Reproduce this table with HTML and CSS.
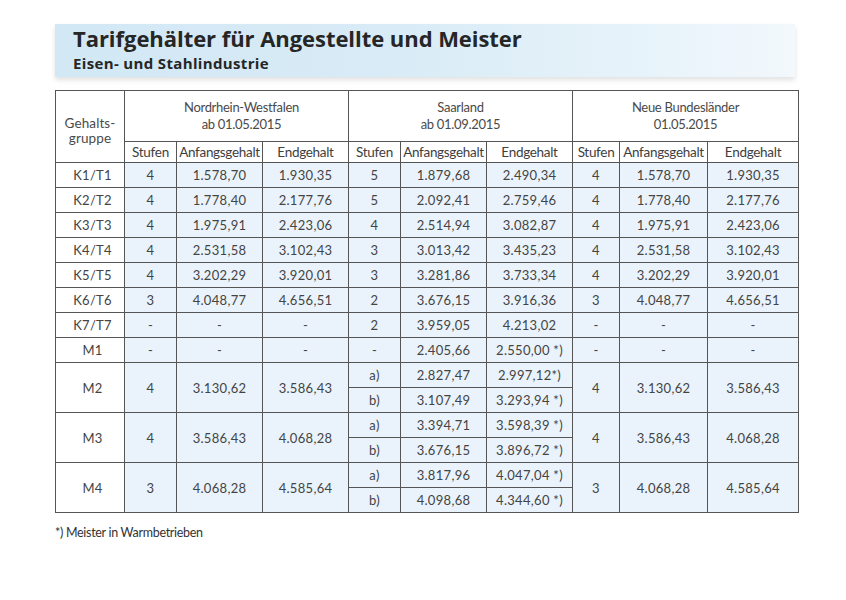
FILE: index.html
```html
<!DOCTYPE html>
<html lang="de">
<head>
<meta charset="utf-8">
<title>Tarifgehälter für Angestellte und Meister</title>
<link rel="stylesheet" href="styles.css">
</head>
<body>
<div class="page">
  <header class="banner">
    <h1 class="title">Tarifgehälter für Angestellte und Meister</h1>
    <h2 class="subtitle">Eisen- und Stahlindustrie</h2>
  </header>

  <table class="tarif">
    <colgroup>
      <col class="c-group">
      <col class="c-stufe"><col class="c-anf"><col class="c-end">
      <col class="c-stufe"><col class="c-anf"><col class="c-end">
      <col class="c-stufe2"><col class="c-anf2"><col class="c-end2">
    </colgroup>
    <thead>
      <tr class="h-main">
        <th rowspan="2" class="h-group">Gehalts-<br>gruppe</th>
        <th colspan="3" class="h-nrw">Nordrhein-Westfalen<br>ab 01.05.2015</th>
        <th colspan="3">Saarland<br>ab 01.09.2015</th>
        <th colspan="3">Neue Bundesländer<br>01.05.2015</th>
      </tr>
      <tr class="h-sub">
        <th>Stufen</th><th>Anfangsgehalt</th><th>Endgehalt</th>
        <th>Stufen</th><th>Anfangsgehalt</th><th>Endgehalt</th>
        <th>Stufen</th><th>Anfangsgehalt</th><th>Endgehalt</th>
      </tr>
    </thead>
    <tbody>
      <tr><th>K1/T1</th><td>4</td><td>1.578,70</td><td>1.930,35</td><td>5</td><td>1.879,68</td><td>2.490,34</td><td>4</td><td>1.578,70</td><td>1.930,35</td></tr>
      <tr><th>K2/T2</th><td>4</td><td>1.778,40</td><td>2.177,76</td><td>5</td><td>2.092,41</td><td>2.759,46</td><td>4</td><td>1.778,40</td><td>2.177,76</td></tr>
      <tr><th>K3/T3</th><td>4</td><td>1.975,91</td><td>2.423,06</td><td>4</td><td>2.514,94</td><td>3.082,87</td><td>4</td><td>1.975,91</td><td>2.423,06</td></tr>
      <tr><th>K4/T4</th><td>4</td><td>2.531,58</td><td>3.102,43</td><td>3</td><td>3.013,42</td><td>3.435,23</td><td>4</td><td>2.531,58</td><td>3.102,43</td></tr>
      <tr><th>K5/T5</th><td>4</td><td>3.202,29</td><td>3.920,01</td><td>3</td><td>3.281,86</td><td>3.733,34</td><td>4</td><td>3.202,29</td><td>3.920,01</td></tr>
      <tr><th>K6/T6</th><td>3</td><td>4.048,77</td><td>4.656,51</td><td>2</td><td>3.676,15</td><td>3.916,36</td><td>3</td><td>4.048,77</td><td>4.656,51</td></tr>
      <tr><th>K7/T7</th><td>-</td><td>-</td><td>-</td><td>2</td><td>3.959,05</td><td>4.213,02</td><td>-</td><td>-</td><td>-</td></tr>
      <tr><th>M1</th><td>-</td><td>-</td><td>-</td><td>-</td><td>2.405,66</td><td>2.550,00 *)</td><td>-</td><td>-</td><td>-</td></tr>

      <tr><th rowspan="2">M2</th><td rowspan="2">4</td><td rowspan="2">3.130,62</td><td rowspan="2">3.586,43</td><td>a)</td><td>2.827,47</td><td>2.997,12*)</td><td rowspan="2">4</td><td rowspan="2">3.130,62</td><td rowspan="2">3.586,43</td></tr>
      <tr><td>b)</td><td>3.107,49</td><td>3.293,94 *)</td></tr>

      <tr><th rowspan="2">M3</th><td rowspan="2">4</td><td rowspan="2">3.586,43</td><td rowspan="2">4.068,28</td><td>a)</td><td>3.394,71</td><td>3.598,39 *)</td><td rowspan="2">4</td><td rowspan="2">3.586,43</td><td rowspan="2">4.068,28</td></tr>
      <tr><td>b)</td><td>3.676,15</td><td>3.896,72 *)</td></tr>

      <tr><th rowspan="2">M4</th><td rowspan="2">3</td><td rowspan="2">4.068,28</td><td rowspan="2">4.585,64</td><td>a)</td><td>3.817,96</td><td>4.047,04 *)</td><td rowspan="2">3</td><td rowspan="2">4.068,28</td><td rowspan="2">4.585,64</td></tr>
      <tr><td>b)</td><td>4.098,68</td><td>4.344,60 *)</td></tr>
    </tbody>
  </table>

  <p class="note">*) Meister in Warmbetrieben</p>
</div>
</body>
</html>
```

FILE: styles.css
```css
html, body {
  margin: 0;
  padding: 0;
  background: #ffffff;
}

.page {
  padding: 24px 0 0 55px;
  font-family: "Lato", "Open Sans", sans-serif;
  color: #444;
}

.banner {
  width: 722px;
  height: 53px;
  padding-left: 18px;
  box-sizing: content-box;
  background: linear-gradient(to right, #d2e8f5 0%, #d8ebf6 45%, #e7f3fa 80%, #f2f8fc 100%);
  box-shadow: 0 3px 5px rgba(0, 0, 0, 0.12);
  display: flex;
  flex-direction: column;
  justify-content: flex-start;
}

.title {
  margin: 0;
  font-family: "Open Sans", sans-serif;
  font-weight: 700;
  font-size: 22px;
  line-height: 29px;
  letter-spacing: -0.05px;
  color: #262626;
}

.subtitle {
  margin: 0;
  font-family: "Open Sans", sans-serif;
  font-weight: 700;
  font-size: 15px;
  line-height: 21px;
  letter-spacing: 0.35px;
  color: #262626;
}

.tarif {
  margin-top: 13px;
  border-collapse: collapse;
  width: 743px;
  table-layout: fixed;
  font-size: 13px;
  color: #444;
}

.c-group { width: 69px; }
.c-stufe { width: 52px; }
.c-anf { width: 86px; }
.c-end { width: 86px; }
.c-stufe2 { width: 47px; }
.c-anf2 { width: 88px; }
.c-end2 { width: 91px; }

.tarif th,
.tarif td {
  border: 1px solid #555;
  text-align: center;
  vertical-align: middle;
  padding: 0;
  font-weight: 400;
  white-space: nowrap;
}

.h-main th {
  height: 50px;
  line-height: 17px;
  font-size: 13px;
  letter-spacing: -0.3px;
  color: #4a4a4a;
  background: #fff;
}

.h-main .h-nrw {
  padding-left: 10px;
}

.h-main .h-group {
  line-height: 15px;
  font-size: 13.5px;
  letter-spacing: 0.1px;
  padding-top: 8px;
}

.h-sub th {
  height: 20px;
  font-size: 13.5px;
  letter-spacing: -0.3px;
  color: #3e3e3e;
  background: #fff;
}

.tarif tbody th {
  background: #fff;
  height: 24px;
  padding-left: 5px;
  letter-spacing: 0.3px;
}

.tarif tbody td {
  background: #eaf3fb;
  height: 24px;
  letter-spacing: 0.3px;
}

.note {
  margin: 12px 0 0 0;
  font-size: 12.5px;
  color: #333;
  letter-spacing: -0.3px;
}
```
